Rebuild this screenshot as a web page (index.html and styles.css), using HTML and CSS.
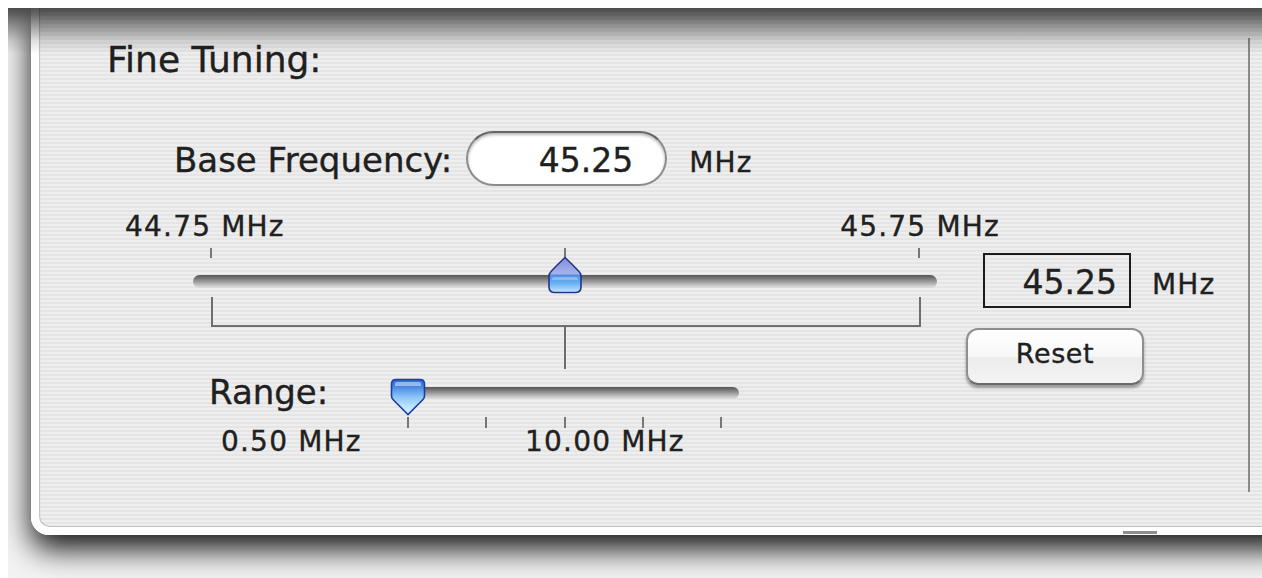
FILE: index.html
```html
<!DOCTYPE html>
<html>
<head>
<meta charset="utf-8">
<link rel="stylesheet" href="styles.css">
</head>
<body>
<div class="shot">
  <div class="panel">
    <div class="content">
      <div class="title">Fine Tuning:</div>
      <div class="base-row">
        <span class="big-label">Base Frequency:</span>
        <div class="pill-input">45.25</div>
        <span class="unit">MHz</span>
      </div>
      <div class="scale-labels">
        <span class="small">44.75 MHz</span>
        <span class="small">45.75 MHz</span>
      </div>
      <div class="slider-area">
        <div class="sliders">
          <div class="main-slider">
            <div class="ticks"><i class="tick"></i><i class="tick"></i><i class="tick"></i></div>
            <div class="track-wrap">
              <div class="track"></div>
              <svg class="thumb-up" width="34" height="38" viewBox="0 0 34 38">
                <defs>
                  <linearGradient id="gUp" x1="0" y1="0" x2="0" y2="1">
                    <stop offset="0" stop-color="#7f8fd6"/>
                    <stop offset="0.47" stop-color="#a7b3ea"/>
                    <stop offset="0.5" stop-color="#4a8fe6"/>
                    <stop offset="0.75" stop-color="#6cb3f3"/>
                    <stop offset="1" stop-color="#c4eaff"/>
                  </linearGradient>
                </defs>
                <path d="M17 1.5 Q24 8 31 15.5 Q33 17.5 33 20.5 L33 31 Q33 36.5 27 36.5 L7 36.5 Q1 36.5 1 31 L1 20.5 Q1 17.5 3 15.5 Q10 8 17 1.5 Z" fill="url(#gUp)" stroke="#27348a" stroke-width="1.6"/>
                <path d="M6 21 L28 21 Q30 21 30 23 L30 24 L4 24 L4 23 Q4 21 6 21 Z" fill="#ffffff" opacity="0.3"/>
              </svg>
            </div>
            <div class="bracket"></div>
            <div class="stem"></div>
          </div>
          <div class="range-row">
            <span class="big-label range-label">Range:</span>
            <div class="range-slider">
              <div class="range-track-wrap">
                <div class="track range-track"></div>
                <svg class="thumb-down" width="36" height="38" viewBox="0 0 36 38">
                  <defs>
                    <linearGradient id="gDown" x1="0" y1="0" x2="0" y2="1">
                      <stop offset="0" stop-color="#2c68d4"/>
                      <stop offset="0.22" stop-color="#4a8be6"/>
                      <stop offset="0.5" stop-color="#8cc4f6"/>
                      <stop offset="0.75" stop-color="#b8e3ff"/>
                      <stop offset="1" stop-color="#dcf3ff"/>
                    </linearGradient>
                  </defs>
                  <path d="M6 1.5 L30 1.5 Q34.5 1.5 34.5 6 L34.5 18 Q34.5 20 33 21.5 L18 36.5 L3 21.5 Q1.5 20 1.5 18 L1.5 6 Q1.5 1.5 6 1.5 Z" fill="url(#gDown)" stroke="#1f3f9a" stroke-width="1.6"/>
                  <path d="M7 4 L29 4 Q31 4 31 6 L31 8 L5 8 L5 6 Q5 4 7 4 Z" fill="#ffffff" opacity="0.45"/>
                </svg>
              </div>
              <div class="range-ticks"><i class="tick short"></i><i class="tick short"></i><i class="tick short"></i><i class="tick short"></i><i class="tick short"></i></div>
            </div>
          </div>
          <div class="range-labels">
            <span class="small first">0.50 MHz</span>
            <span class="small">10.00 MHz</span>
          </div>
        </div>
        <div class="readout">
          <div class="box-row">
            <div class="numbox">45.25</div>
            <span class="unit right-unit">MHz</span>
          </div>
          <button class="reset">Reset</button>
        </div>
      </div>
    </div>
    <div class="divider"></div>
    <div class="grip"></div>
  </div>
</div>
</body>
</html>
```

FILE: styles.css
```css
html {
  background: #ffffff;
}

body {
  margin: 8px 0 0 8px;
  overflow: hidden;
  font-family: "DejaVu Sans", "Liberation Sans", sans-serif;
  color: #202020;
  -webkit-text-stroke: 0.35px #202020;
}

.shot {
  position: relative;
  width: 1254px;
  height: 570px;
  background: #f3f3f3;
  overflow: hidden;
}

.shot::before {
  content: "";
  position: absolute;
  left: 0;
  right: 0;
  top: 0;
  height: 46px;
  z-index: 3;
  pointer-events: none;
  background: linear-gradient(to bottom,
    rgba(0, 0, 0, 0.68) 0px,
    rgba(0, 0, 0, 0.6) 6px,
    rgba(0, 0, 0, 0.38) 18px,
    rgba(0, 0, 0, 0.12) 33px,
    rgba(0, 0, 0, 0) 46px);
}

.panel {
  position: relative;
  display: flex;
  margin-left: 23px;
  width: 1300px;
  height: 519px;
  border-left: 8px solid #ffffff;
  border-bottom: 8px solid #ffffff;
  border-bottom-left-radius: 18px;
  background: repeating-linear-gradient(to bottom, #eeeeee 0px, #eeeeee 2px, #e5e5e5 2px, #e5e5e5 4px);
  box-shadow: inset 1px -1px 1px rgba(0, 0, 0, 0.18), 0 14px 30px rgba(0, 0, 0, 0.92);
}

.content {
  width: 1209px;
  flex: none;
}

.divider {
  flex: none;
  width: 2px;
  height: 454px;
  margin-top: 30px;
  background: #8a8a8a;
}

.grip {
  position: absolute;
  left: 1084px;
  bottom: -7px;
  width: 34px;
  height: 3px;
  background: #8e8e8e;
}

.title {
  margin-top: 32px;
  margin-left: 68px;
  font-size: 36px;
  line-height: 40px;
}

.big-label {
  font-size: 34px;
  line-height: 38px;
}

.small {
  font-size: 28px;
  line-height: 30px;
  letter-spacing: 1.2px;
}

.unit {
  font-size: 28px;
  line-height: 30px;
  letter-spacing: 1.2px;
}

.base-row {
  display: flex;
  align-items: baseline;
  margin-top: 51px;
  margin-left: 135px;
}

.pill-input {
  box-sizing: border-box;
  width: 201px;
  height: 55px;
  margin-left: 14px;
  padding: 4px 32px 0 0;
  border: 2px solid #8c8c8c;
  border-top-color: #666666;
  border-radius: 28px;
  background: #ffffff;
  box-shadow: inset 0 2px 3px rgba(0, 0, 0, 0.28);
  font-size: 33px;
  line-height: 47px;
  text-align: right;
}

.base-row .unit {
  margin-left: 22px;
}

.scale-labels {
  display: flex;
  justify-content: space-between;
  width: 875px;
  margin-top: 26px;
  margin-left: 86px;
}

.slider-area {
  display: flex;
  margin-left: 86px;
}

.sliders {
  width: 841px;
  flex: none;
}

.main-slider {
  width: 744px;
  margin-left: 68px;
}

.ticks {
  display: flex;
  justify-content: space-between;
  height: 10px;
  margin-top: 6px;
  padding: 0 17px;
}

.tick {
  display: block;
  width: 2px;
  height: 10px;
  background: #777777;
}

.tick.short {
  height: 11px;
}

.track-wrap {
  position: relative;
  height: 13px;
  margin-top: 17px;
}

.track {
  height: 100%;
  border-radius: 7px;
  background: linear-gradient(to bottom, #555555 0%, #7e7e7e 30%, #a9a9a9 60%, #cfcfcf 85%, #dedede 100%);
}

.thumb-up {
  position: absolute;
  left: 50%;
  top: -19px;
  transform: translateX(-50%);
  display: block;
}

.bracket {
  box-sizing: border-box;
  height: 30px;
  margin: 9px 16px 0 18px;
  border: 2px solid #6e6e6e;
  border-top: none;
}

.stem {
  width: 2px;
  height: 42px;
  margin: 0 auto;
  background: #6e6e6e;
}

.range-row {
  display: flex;
  align-items: flex-start;
}

.range-label {
  flex: none;
  width: 183px;
  margin-left: 84px;
  margin-top: 4px;
}

.range-slider {
  width: 347px;
  flex: none;
}

.range-track-wrap {
  position: relative;
  height: 12px;
  margin-top: 18px;
}

.range-track {
  border-radius: 6px;
}

.thumb-down {
  position: absolute;
  left: -2px;
  top: -9px;
  display: block;
}

.range-ticks {
  display: flex;
  justify-content: space-between;
  height: 11px;
  margin-top: 18px;
  padding: 0 17px 0 15px;
}

.range-labels {
  display: flex;
  margin-top: -1px;
  margin-left: 96px;
}

.range-labels .first {
  display: inline-block;
  width: 304px;
}

.readout {
  flex: none;
}

.box-row {
  display: flex;
  align-items: baseline;
  margin-top: 11px;
  margin-left: 17px;
}

.numbox {
  box-sizing: border-box;
  width: 148px;
  height: 55px;
  padding: 5px 12px 0 0;
  border: 2px solid #1c1c1c;
  font-size: 33px;
  line-height: 46px;
  text-align: right;
}

.right-unit {
  margin-left: 21px;
}

.reset {
  display: block;
  box-sizing: border-box;
  width: 178px;
  height: 57px;
  margin-top: 20px;
  padding: 0 0 6px 0;
  border: 2px solid #8f8f8f;
  border-bottom-color: #6a6a6a;
  border-radius: 12px;
  background: linear-gradient(to bottom, #ffffff 0%, #f7f7f7 50%, #ececec 52%, #f4f4f4 100%);
  box-shadow: 0 3px 3px rgba(0, 0, 0, 0.35);
  font-family: "DejaVu Sans", "Liberation Sans", sans-serif;
  font-size: 27px;
  letter-spacing: 0.6px;
  color: #202020;
  -webkit-text-stroke: 0.35px #202020;
}
```
